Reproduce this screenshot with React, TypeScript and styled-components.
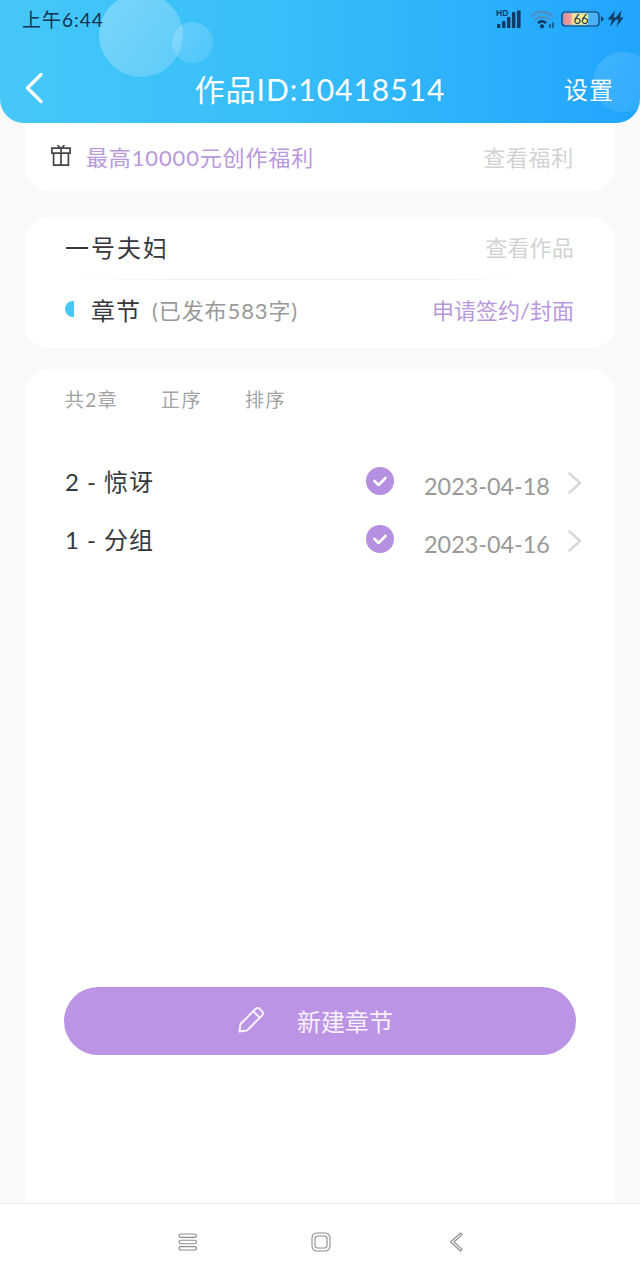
import React from 'react';
import styled, { createGlobalStyle } from 'styled-components';

const FONT = `Lato, "Noto Sans CJK SC", sans-serif`;

const GlobalStyle = createGlobalStyle`
  html, body {
    margin: 0;
    padding: 0;
    background: #f9f9f9;
  }
  * {
    box-sizing: border-box;
  }
`;

const CHAPTERS = [
  { id: 2, title: '2 - 惊讶', date: '2023-04-18' },
  { id: 1, title: '1 - 分组', date: '2023-04-16' },
];

export default function App() {
  return (
    <Page>
      <GlobalStyle />
      <Header>
        <Bubble $size={84} $left={99} $top={-7} $alpha={0.3} />
        <Bubble $size={41} $left={172} $top={22} $alpha={0.2} />
        <Bubble $size={60} $left={593} $top={52} $alpha={0.13} />
        <StatusBar>
          <Time>上午6:44</Time>
          <StatusIcons>
            <SignalIcon />
            <WifiIcon />
            <BatteryIcon />
            <BoltIcon />
          </StatusIcons>
        </StatusBar>
        <TitleRow>
          <BackButton>
            <svg width="20" height="32" viewBox="0 0 20 32" fill="none">
              <path d="M17 2.5 3.5 16 17 29.5" stroke="#fff" strokeWidth="3.4" strokeLinecap="round" strokeLinejoin="round" />
            </svg>
          </BackButton>
          <Title>作品ID:10418514</Title>
          <Settings>设置</Settings>
        </TitleRow>
      </Header>

      <Main>
        <WelfareCard>
          <WelfareLeft>
            <GiftIcon />
            <WelfareText>最高10000元创作福利</WelfareText>
          </WelfareLeft>
          <WelfareLink>查看福利</WelfareLink>
        </WelfareCard>

        <WorkCard>
          <WorkRow>
            <WorkName>一号夫妇</WorkName>
            <MutedLink>查看作品</MutedLink>
          </WorkRow>
          <Divider />
          <ChapterRow>
            <ChapterLeft>
              <HalfDot />
              <ChapterLabel>章节</ChapterLabel>
              <Published>(已发布583字)</Published>
            </ChapterLeft>
            <ApplyLink>申请签约/封面</ApplyLink>
          </ChapterRow>
        </WorkCard>

        <ListCard>
          <ListHead>
            <HeadCount>共2章</HeadCount>
            <HeadItem>正序</HeadItem>
            <HeadItem>排序</HeadItem>
          </ListHead>
          <ChapterList>
            {CHAPTERS.map((c) => (
              <ChapterItem key={c.id}>
                <ChapterTitle>{c.title}</ChapterTitle>
                <CheckIcon />
                <ChapterDate>{c.date}</ChapterDate>
                <ChevronIcon />
              </ChapterItem>
            ))}
          </ChapterList>
          <NewButton>
            <PencilIcon />
            <NewLabel>新建章节</NewLabel>
          </NewButton>
        </ListCard>
      </Main>

      <NavBar>
        <svg width="20" height="18" viewBox="0 0 20 18" fill="none" stroke="#8c8c8c" strokeWidth="1.1">
          <rect x="1" y="1" width="17.5" height="3.4" rx="1.7" />
          <rect x="1" y="7.3" width="17.5" height="3.4" rx="1.7" />
          <rect x="1" y="13.6" width="17.5" height="3.4" rx="1.7" />
        </svg>
        <svg width="20" height="20" viewBox="0 0 20 20" fill="none" stroke="#8c8c8c" strokeWidth="1.1">
          <rect x="1" y="1" width="18" height="18" rx="5" />
          <rect x="4" y="4" width="12" height="12" rx="2.5" />
        </svg>
        <svg width="14" height="20" viewBox="0 0 14 20" fill="none" stroke="#8c8c8c" strokeWidth="1.1" strokeLinejoin="round">
          <path d="M11.5 1 1.5 10 11.5 19 13 17.4 5 10 13 2.6Z" />
        </svg>
      </NavBar>
    </Page>
  );
}

function SignalIcon() {
  return (
    <svg width="26" height="20" viewBox="0 0 26 20" style={{ marginRight: 8 }}>
      <text x="0" y="6.8" fontFamily="Liberation Sans, sans-serif" fontWeight="700" fontSize="8.5" fill="#123a63">HD</text>
      <g fill="#123a63">
        <rect x="1" y="15" width="3.4" height="4" rx="0.8" />
        <rect x="6" y="12" width="3.4" height="7" rx="0.8" />
        <rect x="11" y="8" width="3.4" height="11" rx="0.8" />
        <rect x="16" y="3" width="3.4" height="16" rx="0.8" />
        <rect x="21" y="1.5" width="3.6" height="17.5" rx="0.8" />
      </g>
    </svg>
  );
}

function WifiIcon() {
  return (
    <svg width="26" height="20" viewBox="0 0 26 20" fill="none" style={{ marginRight: 5 }}>
      <path d="M1 7.5C7 1.5 17 1.5 23 7.5" stroke="#4f8fc4" strokeWidth="2.4" />
      <path d="M4.5 11C9 6.8 15 6.8 19.5 11" stroke="#4f8fc4" strokeWidth="2.4" />
      <path d="M8 14.2C10.5 11.6 13.5 11.6 16 14.2" stroke="#123a63" strokeWidth="2.4" />
      <circle cx="12" cy="17.3" r="2.1" fill="#123a63" />
      <path d="M20 15v4M23 13.5v5.5" stroke="#123a63" strokeWidth="1.3" />
    </svg>
  );
}

function BatteryIcon() {
  return (
    <svg width="43" height="18" viewBox="0 0 43 18" style={{ marginRight: 3 }}>
      <defs>
        <linearGradient id="batteryFill" x1="0" x2="1" y1="0" y2="0">
          <stop offset="0" stopColor="#e88a93" />
          <stop offset="0.3" stopColor="#eea0a0" />
          <stop offset="0.38" stopColor="#f2e39a" />
          <stop offset="1" stopColor="#f4f28c" />
        </linearGradient>
      </defs>
      <rect x="1" y="2" width="37" height="14" rx="3.5" fill="#4db1f5" stroke="#123a63" strokeWidth="1.2" />
      <rect x="2.2" y="3.2" width="25" height="11.6" rx="2.5" fill="url(#batteryFill)" />
      <text x="12.5" y="14" fontFamily="Lato, sans-serif" fontSize="13" fill="#17324f">66</text>
      <path d="M40 6 43 9 40 12Z" fill="#123a63" />
    </svg>
  );
}

function BoltIcon() {
  return (
    <svg width="17" height="18" viewBox="0 0 17 18" fill="#123a63">
      <path d="M8 .5 .5 9.5H5L3 17 10.5 7.5H6.5Z" />
      <path d="M14.5 .5 7 9.5H11.5L9.5 17 16.5 7.5H13Z" />
    </svg>
  );
}

function GiftIcon() {
  return (
    <GiftWrap viewBox="0 0 20 21" fill="none" stroke="#45454b" strokeWidth="1.7">
      <path d="M.9 3.2h18.2v5H.9zM2.6 8.2h14.8v11.9H2.6zM10 3.2v16.9M6.5 .2 9.5 3M13.5 .2 10.5 3" />
    </GiftWrap>
  );
}

function CheckIcon() {
  return (
    <CheckWrap viewBox="0 0 28 28">
      <circle cx="14" cy="14" r="14" fill="#b690e0" />
      <path d="M8.5 14 12.5 18 19.5 11" fill="none" stroke="#fff" strokeWidth="2.6" strokeLinecap="round" strokeLinejoin="round" />
    </CheckWrap>
  );
}

function ChevronIcon() {
  return (
    <ChevronWrap viewBox="0 0 14 22">
      <path d="M1.5 1.5 12 11 1.5 20.5" fill="none" stroke="#d8d8d8" strokeWidth="2.4" strokeLinecap="round" strokeLinejoin="round" />
    </ChevronWrap>
  );
}

function PencilIcon() {
  return (
    <svg width="28" height="28" viewBox="0 0 28 28" fill="none" stroke="#f7f1fc" strokeWidth="2" strokeLinejoin="round">
      <path d="M2.5 25.5 3.5 18 18.5 3a3 3 0 0 1 4.2 0l2.3 2.3a3 3 0 0 1 0 4.2L10 24.5Z" />
      <path d="M16.5 5.5 22.5 11.5" />
    </svg>
  );
}

const Page = styled.div`
  width: 640px;
  height: 1280px;
  display: flex;
  flex-direction: column;
  overflow: hidden;
  background: #f9f9f9;
  font-family: ${FONT};
`;

const Header = styled.header`
  position: relative;
  height: 123px;
  flex: none;
  padding: 0 26px 0 22px;
  overflow: hidden;
  border-radius: 0 0 24px 24px;
  background: linear-gradient(90deg, #45c8f8 0%, #37bdf9 45%, #21a5fd 100%);
`;

const Bubble = styled.div<{ $size: number; $left: number; $top: number; $alpha: number }>`
  position: absolute;
  left: ${(p) => p.$left}px;
  top: ${(p) => p.$top}px;
  width: ${(p) => p.$size}px;
  height: ${(p) => p.$size}px;
  border-radius: 50%;
  background: linear-gradient(
    135deg,
    rgba(255, 255, 255, ${(p) => p.$alpha}),
    rgba(255, 255, 255, ${(p) => p.$alpha * 0.55})
  );
`;

const StatusBar = styled.div`
  position: relative;
  height: 40px;
  display: flex;
  align-items: center;
  justify-content: space-between;
`;

const Time = styled.span`
  padding-bottom: 4px;
  font-size: 19px;
  letter-spacing: 1px;
  color: #17324f;
`;

const StatusIcons = styled.div`
  display: flex;
  align-items: center;
  margin-right: -10px;
  padding-bottom: 2px;
`;

const TitleRow = styled.div`
  position: relative;
  height: 50px;
  margin-top: 23px;
  display: flex;
  align-items: center;
  justify-content: space-between;
`;

const BackButton = styled.div`
  width: 102px;
  display: flex;
  align-items: center;
  margin-left: 2px;
`;

const Title = styled.h1`
  margin: 0;
  font-size: 30px;
  font-weight: 400;
  letter-spacing: 1px;
  color: #fff;
`;

const Settings = styled.span`
  width: 100px;
  text-align: right;
  font-size: 24px;
  letter-spacing: 1px;
  color: #fff;
`;

const Main = styled.main`
  flex: 1;
  min-height: 0;
  display: flex;
  flex-direction: column;
  padding: 0 25px;
`;

const WelfareCard = styled.section`
  height: 68px;
  flex: none;
  padding: 0 41px 2px 26px;
  display: flex;
  align-items: center;
  justify-content: space-between;
  background: #fff;
  border-radius: 0 0 24px 24px;
`;

const WelfareLeft = styled.div`
  display: flex;
  align-items: center;
  gap: 15px;
`;

const GiftWrap = styled.svg`
  width: 20px;
  height: 21px;
  margin-top: -1px;
`;

const WelfareText = styled.span`
  font-size: 22px;
  letter-spacing: 0.85px;
  color: #b998dc;
`;

const MutedLink = styled.span`
  font-size: 22px;
  letter-spacing: 0.2px;
  color: #d2d2d2;
`;

const WelfareLink = styled(MutedLink)`
  letter-spacing: 0.7px;
`;

const WorkCard = styled.section`
  height: 131px;
  flex: none;
  margin-top: 26px;
  padding: 0 41px 0 40px;
  display: flex;
  flex-direction: column;
  background: #fff;
  border-radius: 24px;
`;

const WorkRow = styled.div`
  height: 62px;
  padding-bottom: 4px;
  display: flex;
  align-items: center;
  justify-content: space-between;
`;

const WorkName = styled.span`
  font-size: 24px;
  letter-spacing: 2px;
  color: #38383c;
`;

const Divider = styled.div`
  height: 1px;
  background: linear-gradient(90deg, #fff 0%, #f0f0f0 25%, #f0f0f0 70%, #fff 90%);
`;

const ChapterRow = styled.div`
  height: 62px;
  padding-bottom: 4px;
  display: flex;
  align-items: center;
  justify-content: space-between;
`;

const ChapterLeft = styled.div`
  display: flex;
  align-items: center;
`;

const HalfDot = styled.span`
  width: 9px;
  height: 16px;
  margin-right: 17px;
  border-radius: 9px 0 0 9px;
  background: #45c8f5;
`;

const ChapterLabel = styled.span`
  font-size: 24px;
  letter-spacing: 1px;
  margin-right: 11px;
  color: #38383c;
`;

const Published = styled.span`
  font-size: 22px;
  letter-spacing: 0.9px;
  color: #999;
`;

const ApplyLink = styled.span`
  font-size: 22px;
  color: #b998dc;
`;

const ListCard = styled.section`
  flex: 1;
  min-height: 0;
  margin-top: 21px;
  padding: 0 33px 148px 40px;
  display: flex;
  flex-direction: column;
  background: #fff;
  border-radius: 24px 24px 0 0;
`;

const ListHead = styled.div`
  height: 62px;
  flex: none;
  padding-bottom: 4px;
  display: flex;
  align-items: center;
  gap: 43px;
`;

const HeadItem = styled.span`
  font-size: 19px;
  letter-spacing: 1.5px;
  color: #a3a3a3;
`;

const HeadCount = styled(HeadItem)`
  letter-spacing: 1.3px;
`;

const ChapterList = styled.ul`
  margin: 21px 0 0;
  padding: 0;
  list-style: none;
`;

const ChapterItem = styled.li`
  height: 58px;
  display: flex;
  align-items: center;
`;

const ChapterTitle = styled.span`
  flex: 1;
  margin-bottom: 2px;
  font-size: 24px;
  letter-spacing: 1px;
  color: #38383c;
`;

const CheckWrap = styled.svg`
  width: 28px;
  height: 28px;
  margin-right: 30px;
`;

const ChapterDate = styled.span`
  width: 125px;
  margin-top: 9px;
  margin-right: 19px;
  font-size: 23.4px;
  white-space: nowrap;
  color: #999;
`;

const ChevronWrap = styled.svg`
  width: 14px;
  height: 22px;
  margin-top: 4px;
`;

const NewButton = styled.button`
  width: 512px;
  height: 68px;
  margin-top: auto;
  margin-left: -1px;
  padding: 0 10px 3px 0;
  border: none;
  border-radius: 34px;
  flex: none;
  display: flex;
  align-items: center;
  justify-content: center;
  gap: 32px;
  background: #bc94e6;
  font-family: ${FONT};
`;

const NewLabel = styled.span`
  padding-top: 2px;
  font-size: 24px;
  color: #f7f1fc;
`;

const NavBar = styled.nav`
  height: 77px;
  flex: none;
  padding-left: 178px;
  display: grid;
  grid-template-columns: 133px 138px auto;
  align-items: center;
  background: #fff;
  border-top: 1px solid #ececec;
`;
